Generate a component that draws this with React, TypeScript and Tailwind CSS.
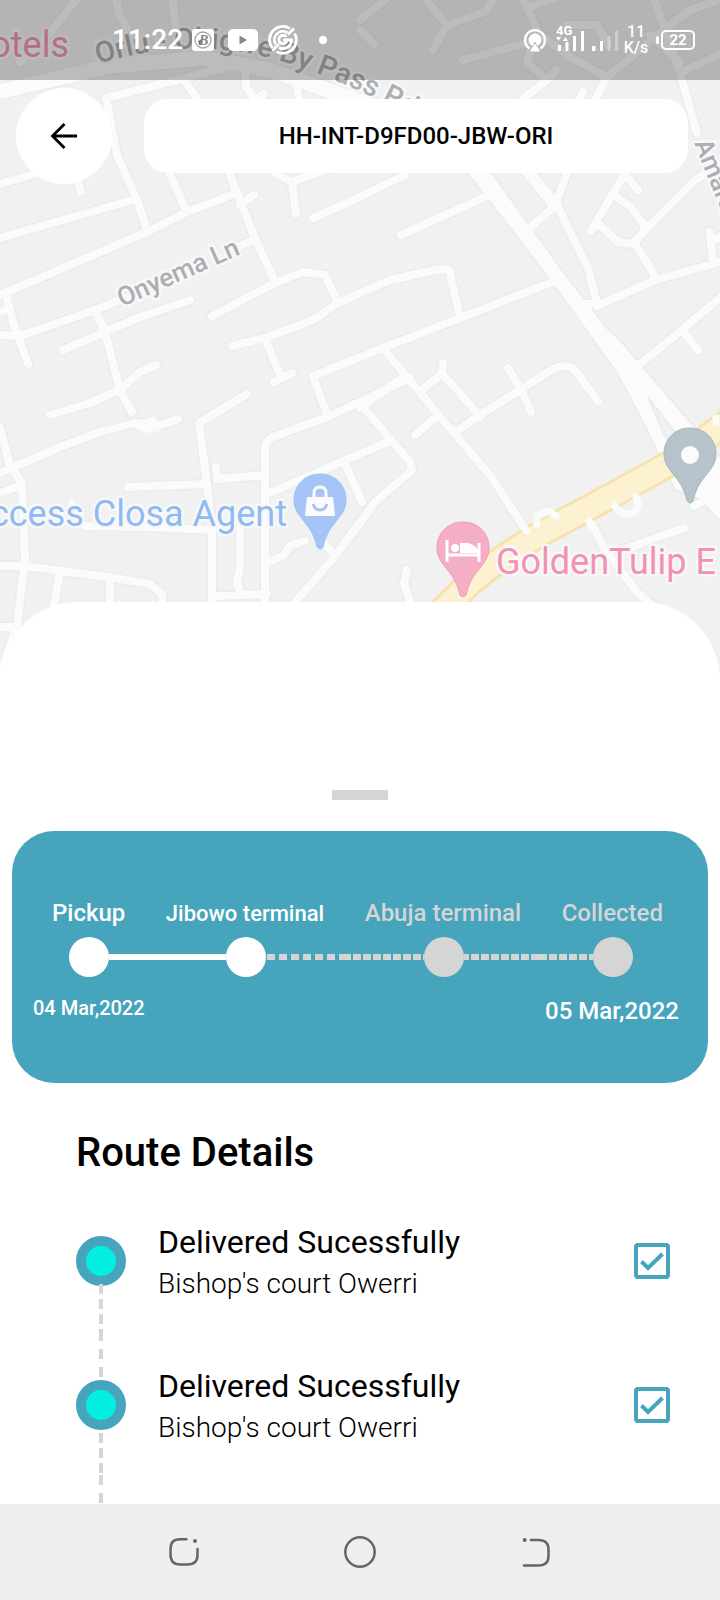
import React from "react";

const streets = [
  "M80 -5L50 33L20 62",
  "M115 -5L120 15L130 35",
  "M172 -5L176 30",
  "M106 98L240 64L300 80",
  "M106 98L117 155L137 200L147 230",
  "M184 80L198 100",
  "M245 65L246 87L256 100L264 94",
  "M294 74L299 98",
  "M0 184L38 173L78 160M77 178L81 192",
  "M0 238L133 200",
  "M0 295L147 232L187 212L237 193",
  "M168 170L187 212",
  "M226 165L237 193L255 238L275 282",
  "M240 204L254 195M240 246L255 239",
  "M275 173L292 182L296 214M292 182L345 162",
  "M313 218L360 197L405 175",
  "M401 235L487 196",
  "M212 316L275 283L303 272L325 275L338 303",
  "M232 346L265 338L313 320L338 303L390 280L440 269L449 270L460 317",
  "M265 338L280 375M274 382L292 373",
  "M328 417L313 376L383 348L460 318L555 281",
  "M6 295L13 322L28 364M0 335L20 336L95 310L125 298M0 312L9 309",
  "M95 310L105 332L120 390L132 412",
  "M63 350L105 332L140 317L190 300",
  "M50 415L90 403L120 390L140 372L156 365",
  "M0 473L60 447L100 432L135 423L160 425L178 419",
  "M0 428L10 465L22 484L25 560L17 625L0 675M0 493L22 485",
  "M247 394L199 423L207 484L212 530L212 605",
  "M128 487L207 484",
  "M216 467L217 479L265 475",
  "M265 605V450Q265 440 275 436L328 417L410 378",
  "M270 493L360 454L392 440",
  "M72 503V515M85 526L150 527L212 530",
  "M240 528V568L237 582L241 595M212 596L267 594",
  "M0 566L25 566L115 578L150 584L162 594V605",
  "M60 571L53 610M110 578V605M0 627H17",
  "M268 562L283 556L291 545L305 541",
  "M345 463L362 502M325 544L334 555",
  "M290 608L330 562L362 520L375 502L412 470L410 462L363 407",
  "M415 435L437 416",
  "M383 348L437 413L492 478L527 532",
  "M360 408L405 376",
  "M420 391L442 374L443 364M442 374L457 390L480 417M455 432L480 415L520 390L548 372Q565 361 575 370L598 401",
  "M508 368L522 391L531 412",
  "M530 228L556 205M568 170L556 203L588 268L597 304H582",
  "M597 306L655 280L720 262",
  "M591 231L628 168M600 225L618 242L633 244L645 230L695 180L720 165M615 196L630 206L647 229",
  "M635 244L653 272L655 280M620 168L638 190",
  "M710 232L713 264M713 240L724 235",
  "M640 364L682 330L724 294M682 330L698 350",
  "M423 -4L447 25L485 12L495 -4M447 25L433 50",
  "M360 20L390 -4M360 30L374 44",
  "M463 60L527 43",
  "M522 -4L537 30L527 62L547 80L524 98M547 80L556 70",
  "M527 8L560 -4M537 32L570 57L607 77L593 105M567 25L597 25L608 45M607 77L660 33L690 10L724 -2",
  "M653 -4L680 73L697 133M680 73L724 52M650 35L680 62",
  "M578 103L583 92",
  "M590 520L605 550L637 592L660 612M622 550L684 528",
  "M407 570L404 583L411 605M694 506L706 500",
];

const highways = [
  "M-10 94L110 66L205 58L270 70L350 98L420 122L470 165",
];

function Halo({ children }: { children: React.ReactNode }) {
  return (
    <g stroke="#f8f8f8" strokeWidth="5" strokeLinejoin="round" paintOrder="stroke">
      {children}
    </g>
  );
}

function Pin({ x, y, fill, edge, children }: { x: number; y: number; fill: string; edge: string; children: React.ReactNode }) {
  return (
    <g transform={`translate(${x} ${y})`}>
      <path
        d="M0 -26C15 -26 26 -15 26 0C26 10 20 16 13 25C7 33 5 39 3 47Q0 51 -3 47C-5 39 -7 33 -13 25C-20 16 -26 10 -26 0C-26 -15 -15 -26 0 -26Z"
        fill={fill}
        stroke={edge}
        strokeWidth="1"
      />
      {children}
    </g>
  );
}

function StreetMap() {
  const d = streets.join("");
  const h = highways.join("");
  return (
    <svg
      viewBox="0 0 720 680"
      preserveAspectRatio="xMidYMin slice"
      className="absolute inset-0 h-full w-full"
      fontFamily="Roboto, sans-serif"
      role="img"
      aria-label="Street map"
    >
      <rect width="720" height="680" fill="#f1f1f1" />
      <g fill="none" strokeLinecap="round" strokeLinejoin="round">
        <g stroke="#ebeced">
          <path d={d} strokeWidth="11" />
          <path d={h} strokeWidth="18" />
          <path d="M518 160L556 206" strokeWidth="15" />
        </g>
        <path
          d="M430 125L473 180L550 280L617 373L647 430L675 490L700 500L730 532V468L697 430L620 340L607 328L567 277L497 180L455 125Z"
          fill="#fbfbfb"
          stroke="#ebeced"
          strokeWidth="2"
        />
        <g stroke="#fbfbfb">
          <path d={d} strokeWidth="8" />
          <path d={h} strokeWidth="15" />
          <path d="M518 160L556 206" strokeWidth="12" />
        </g>
        <path d="M648 397L663 432L680 465H702L673 430Z" fill="#f1f1f1" stroke="#ebeced" strokeWidth="2" />
        <path d="M430 622L470 583Q498 559 540 534L620 491L680 458L730 420" stroke="#f6e2ac" strokeWidth="28" />
        <path d="M430 622L470 583Q498 559 540 534L620 491L680 458L730 420" stroke="#fcf2d2" strokeWidth="22" />
        <path
          d="M537 524L537 516L549 511L556 516M615 506Q620 515 629 514Q638 512 638 503L636 496M524 528L527 531M589 521L592 528M716 418V422"
          stroke="#fbfbfb"
          strokeWidth="7"
        />
        <path d="M137 425L153 420L158 428L146 430Z" stroke="#fbfbfb" strokeWidth="6" />
      </g>

      <Halo>
        <g fill="#abafb3" fontWeight="500">
          <path id="bypass" d="M98 64Q196 34 284 62T446 138" fill="none" stroke="none" />
          <text fontSize="29">
            <textPath href="#bypass">Orlu - Obigwe By Pass Rd</textPath>
          </text>
          <text fontSize="26" transform="translate(122 307) rotate(-24)">Onyema Ln</text>
          <text fontSize="26" transform="translate(694 143) rotate(68)">Amaraku</text>
        </g>
        <g fontSize="36">
          <text x="69" y="57" textAnchor="end" fill="#f095b7">otels</text>
          <text x="287" y="526" textAnchor="end" fill="#8fbaf3">ccess Closa Agent</text>
          <text x="496" y="574" fill="#f291b3">GoldenTulip E</text>
        </g>
      </Halo>

      <Pin x={320} y={500} fill="#a6c4f7" edge="#9dbdf5">
        <path d="M-13 -3H13L15 16H-15Z" fill="#fbfbfb" />
        <path d="M-6 -3V-7Q-6 -13 0 -13T6 -7V-3" fill="none" stroke="#fbfbfb" strokeWidth="3" />
        <path d="M-7 4Q-5 10 0 10T7 4" fill="none" stroke="#a6c4f7" strokeWidth="3" />
      </Pin>
      <Pin x={463} y={548} fill="#f4aec6" edge="#f198b9">
        <path d="M-16 -8V14M16 -5V14M-16 7H16" stroke="#fff" strokeWidth="3" fill="none" />
        <path d="M-3 5V-5H5Q14 -3 16 5Z" fill="#fff" />
        <circle cx="-8" cy="0" r="4" fill="#fff" />
      </Pin>
      <Pin x={690} y={454} fill="#b7c3ca" edge="#a9b8c0">
        <circle cy="1" r="9" fill="#fbfbfb" />
      </Pin>
    </svg>
  );
}

function StatusBar() {
  return (
    <div className="relative flex h-20 items-center justify-between bg-black/25 pr-[25px] pl-28 text-white">
      <div className="flex items-center">
        <time className="w-20 text-[28px] leading-8 font-medium">11:22</time>
        <svg className="h-[22px] w-[22px]" viewBox="0 0 22 22" aria-hidden="true">
          <rect width="22" height="22" rx="3" fill="#fff" />
          <circle cx="11" cy="11" r="8" fill="none" stroke="#a3a3a3" strokeWidth="1.3" />
          <path d="M6 12L10 10L9 16H7Z" fill="#777" />
          <text x="7" y="16" fontSize="14" fontStyle="italic" fontWeight="700" fontFamily="Liberation Serif, serif" fill="#858585">B</text>
        </svg>
        <svg className="ml-3.5 h-[22px] w-[30px]" viewBox="0 0 30 22" aria-hidden="true">
          <rect width="30" height="22" rx="5" fill="#fff" />
          <path d="M11.500 6.500L19 11L11.500 15.500Z" fill="#888" />
        </svg>
        <svg className="ml-2.5 h-[30px] w-[30px]" viewBox="0 0 30 30" fill="none" stroke="#fff" strokeWidth="2.800" aria-hidden="true">
          <path d="M22 3.600A13.300 13.300 0 0 0 4.500 23.200" />
          <path d="M8.500 26.600A13.300 13.300 0 0 0 26.600 8.500" />
          <path d="M19.500 7.700A8.500 8.500 0 0 0 7.800 19.500" />
          <path d="M11 22.500A8.500 8.500 0 0 0 23.500 15H15" />
          <path d="M4.500 25.500L11 19M20 9.500L26 3.500" />
          <path d="M18.500 12A4.200 4.200 0 1 0 19 16" />
        </svg>
        <span className="ml-[21px] h-2 w-2 rounded-full bg-white" />
      </div>
      <div className="flex items-center">
        <svg className="h-6 w-6" viewBox="0 0 24 24" fill="none" stroke="#fff" aria-hidden="true">
          <path d="M6.500 20.500A10 10 0 1 1 17.500 20.500" strokeWidth="2.400" />
          <circle cx="12" cy="12" r="6.500" fill="#fff" stroke="none" />
          <path d="M12 13.500L18 24H6Z" fill="#b4b4b4" stroke="none" />
          <path d="M12 16L16.500 23H7.500Z" fill="#fff" stroke="#fff" strokeWidth="1" strokeLinejoin="round" />
        </svg>
        <svg className="ml-[9px] h-[30px] w-[66px]" viewBox="0 0 66 30" fill="#fff" aria-hidden="true">
          <text x="0" y="10" fontSize="13" fontWeight="700" fontFamily="Roboto, sans-serif">4G</text>
          <path d="M0 12H5L2.500 16ZM7 16H12L9.500 12Z" />
          <path d="M2 20H5V26H2ZM9.500 17H12.500V26H9.500ZM17 11H20V26H17ZM25 6H28V26H25Z" />
          <path d="M36 21H39.500V26H36ZM44 16H47V26H44Z" />
          <path d="M51.500 11H54.500V26H51.500ZM59 6H62V26H59Z" opacity="0.350" />
        </svg>
        <div className="w-7 text-center text-base leading-4 font-medium">
          <div>11</div>
          <div>K/s</div>
        </div>
        <span className="ml-1.5 h-2 w-[3px] rounded-sm bg-white" />
        <span className="ml-0.5 flex h-5 w-[34px] items-center justify-center rounded-[5px] border-2 border-white text-[15px] leading-none font-bold">
          22
        </span>
      </div>
    </div>
  );
}

const timelineDashes = [
  ["-mt-0.5 h-2.5", "mt-[5px] h-2.5", "mt-[5px] h-2.5", "mt-[5px] h-3", "mt-2 h-2.5", "mt-2 h-2.5"],
  ["mt-[3px] h-2.5", "mt-[5px] h-2.5", "mt-[5px] h-2.5", "mt-0.5 h-2.5", "mt-2 h-2.5"],
];

const stops = [
  { id: "stop-1", title: "Delivered Sucessfully", place: "Bishop's court Owerri", height: "min-h-36" },
  { id: "stop-2", title: "Delivered Sucessfully", place: "Bishop's court Owerri", height: "min-h-31" },
];

function ProgressCard() {
  return (
    <section className="mx-3 mt-[31px] rounded-[42px] bg-[#46a4bc] pt-[66px] pb-14 font-medium text-white">
      <div className="flex items-baseline justify-between pr-[45px] pl-10 text-2xl leading-8">
        <span>Pickup</span>
        <span className="text-[22px]">Jibowo terminal</span>
        <span className="text-[#d5d5d5]">Abuja terminal</span>
        <span className="text-[#d5d5d5]">Collected</span>
      </div>
      <div className="mt-[7px] flex items-center pr-[75px] pl-[57px]">
        <span className="h-10 w-10 rounded-full bg-white" />
        <span className="h-1.5 flex-[117] bg-white" />
        <span className="h-10 w-10 rounded-full bg-white" />
        <span className="flex h-1.5 flex-[158]">
          <span className="w-[73px] bg-[linear-gradient(90deg,#d5d5d5_8px,transparent_8px)] bg-[length:12px_100%] bg-[position:1px_0]" />
          <span className="w-3 bg-[#d5d5d5]" />
          <span className="flex-1 bg-[linear-gradient(90deg,transparent_2px,#d5d5d5_2px)] bg-[length:10px_100%]" />
        </span>
        <span className="h-10 w-10 rounded-full bg-[#d5d5d5]" />
        <span className="flex h-1.5 flex-[129]">
          <span className="w-[67px] bg-[linear-gradient(90deg,#d5d5d5_8px,transparent_8px)] bg-[length:10px_100%] bg-right" />
          <span className="w-4 bg-[#d5d5d5]" />
          <span className="flex-1 bg-[linear-gradient(90deg,transparent_2px,#d5d5d5_2px)] bg-[length:10px_100%]" />
        </span>
        <span className="h-10 w-10 rounded-full bg-[#d5d5d5]" />
      </div>
      <div className="mt-3.5 flex items-center justify-between pr-[29px] pl-[21px]">
        <span className="pb-0.5 text-xl leading-7">04 Mar,2022</span>
        <span className="pt-1 text-2xl leading-8">05 Mar,2022</span>
      </div>
    </section>
  );
}

export default function App() {
  return (
    <div className="flex min-h-screen flex-col bg-white font-[Roboto,sans-serif] text-black">
      <header className="relative h-[680px] overflow-hidden">
        <StreetMap />
        <StatusBar />
        <div className="relative flex items-center gap-8 pt-2 pr-8 pl-4">
          <button type="button" aria-label="Back" className="flex h-24 w-24 shrink-0 items-center justify-center rounded-full bg-white">
            <svg className="h-7 w-7" viewBox="0 0 28 28" fill="none" stroke="#000" strokeWidth="2.800" aria-hidden="true">
              <path d="M27 14H3M14.500 2L2.500 14L14.500 26" />
            </svg>
          </button>
          <h1 className="flex h-[74px] flex-1 items-center justify-center rounded-3xl bg-white text-2xl font-medium">
            HH-INT-D9FD00-JBW-ORI
          </h1>
        </div>
      </header>

      <main className="relative -mt-[78px] flex-1 rounded-t-[78px] bg-white pt-[188px]">
        <div className="mx-auto h-2.5 w-14 bg-[#d5d5d5]" />
        <ProgressCard />
        <section className="pr-[50px] pl-[76px]">
          <h2 className="mt-[46px] text-[40px] leading-[48px] font-medium">Route Details</h2>
          <ul className="mt-[59px]">
            {stops.map((stop, i) => (
              <li key={stop.id} className={`flex items-start ${stop.height}`}>
                <div className="flex w-[50px] flex-col items-center">
                  <span className="h-[50px] w-[50px] rounded-full border-10 border-[#46a4bc] bg-[#02efe2]" />
                  {timelineDashes[i].map((dash, n) => (
                    <span key={n} className={`w-1 bg-[#d5d5d5] ${dash}`} />
                  ))}
                </div>
                <label htmlFor={stop.id} className="-mt-3.5 ml-8 flex-1">
                  <span className="block text-[32px] leading-10">{stop.title}</span>
                  <span className="block text-[28px] leading-11 font-light">{stop.place}</span>
                </label>
                <span className="relative mt-[7px] h-9 w-9">
                  <input
                    id={stop.id}
                    type="checkbox"
                    defaultChecked
                    className="peer block h-9 w-9 appearance-none rounded-sm border-4 border-[#46a4bc]"
                  />
                  <svg
                    className="pointer-events-none absolute inset-0 hidden peer-checked:block"
                    viewBox="0 0 36 36"
                    fill="none"
                    stroke="#46a4bc"
                    strokeWidth="4"
                    aria-hidden="true"
                  >
                    <path d="M7.500 18.500L14 25L28.500 11" />
                  </svg>
                </span>
              </li>
            ))}
          </ul>
        </section>
      </main>

      <nav className="relative grid h-24 grid-cols-3 items-center justify-items-center bg-[#efefef] px-24">
        <button type="button" aria-label="Recent apps">
          <svg className="h-8 w-8" viewBox="0 0 32 32" fill="none" stroke="#666" strokeWidth="2.500" strokeLinecap="round" aria-hidden="true">
            <path d="M18.500 3.300H12Q2.500 3.300 2.500 13V18.500Q2.500 28.500 12 28.500H19.500Q29.500 28.500 29.500 19V13" />
            <circle cx="27" cy="5" r="2" fill="#666" stroke="none" />
          </svg>
        </button>
        <button type="button" aria-label="Home">
          <svg className="h-8 w-8" viewBox="0 0 32 32" fill="none" stroke="#666" strokeWidth="2.500" aria-hidden="true">
            <circle cx="16" cy="16" r="14.700" />
          </svg>
        </button>
        <button type="button" aria-label="Go back">
          <svg className="h-8 w-8" viewBox="0 0 32 32" fill="none" stroke="#666" strokeWidth="2.500" strokeLinecap="round" aria-hidden="true">
            <path d="M11 4H18.500Q28.500 4 28.500 13.500V20Q28.500 29.500 18.500 29.500H4" />
            <circle cx="4.700" cy="4" r="2" fill="#666" stroke="none" />
          </svg>
        </button>
      </nav>
    </div>
  );
}
